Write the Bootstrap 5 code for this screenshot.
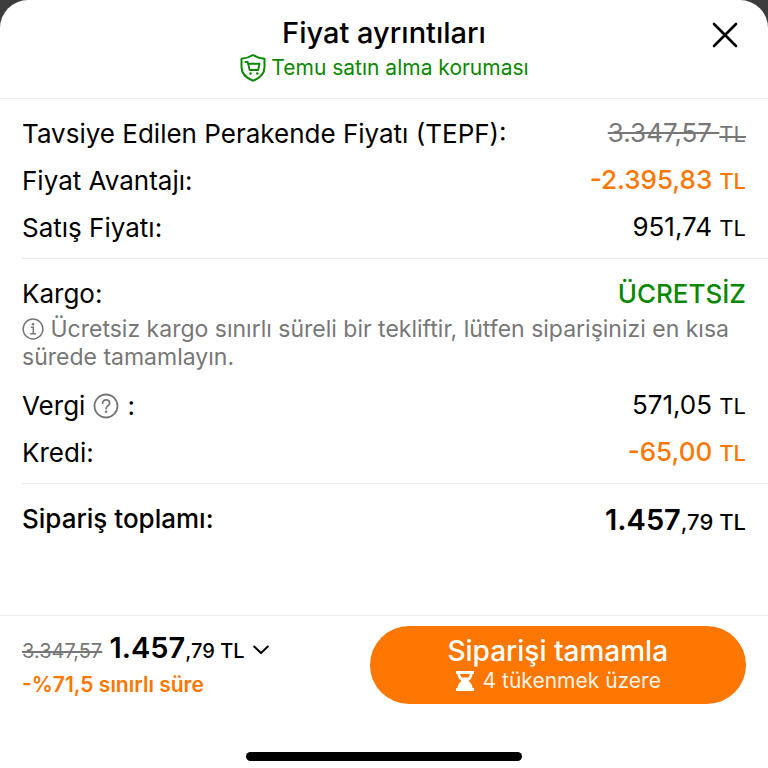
<!DOCTYPE html>
<html lang="tr">
<head>
<meta charset="utf-8">
<meta name="viewport" content="width=device-width, initial-scale=1">
<title>Fiyat ayrıntıları</title>
<link href="https://cdn.jsdelivr.net/npm/bootstrap@5.3.0/dist/css/bootstrap.min.css" rel="stylesheet">
<style>
  body { font-family: Inter, "Noto Sans", sans-serif; background: #3c3c3c; color: #000; font-size: 26px; line-height: 36px; }
  .sheet { border-radius: 28px 28px 0 0; }
  .sheet-head { padding: 14px 22px; border-bottom: 1px solid #efefef; }
  .sheet-title { font-size: 29px; line-height: 38px; font-weight: 500; }
  .protect { font-size: 21px; line-height: 32px; color: #0a8800; }
  .btn-x { top: 22px; right: 30px; width: 26px; height: 26px; }
  .group { margin-left: 22px; padding: 11px 22px 7px 0; border-bottom: 1px solid #ebebeb; }
  .line { min-height: 47px; }
  .unit { font-size: 22px; }
  .muted { color: #777; }
  .green { color: #0a8800; }
  .orange { color: #fb7701; }
  .note { font-size: 23px; line-height: 28px; color: #777; margin: -2px 0 11px; }
  .note svg { vertical-align: -3px; }
  .total-price { font-size: 29px; }
  .foot { border-top: 1px solid #ebebeb; padding: 10px 22px 0; }
  .old-price { font-size: 20px; }
  .now-price { font-size: 29px; }
  .cents { font-size: 20px; }
  .deal { font-size: 21px; line-height: 32px; font-weight: 600; }
  .btn-order { flex: 0 0 52%; min-height: 78px; background: #fb7701; font-size: 28px; line-height: 32px; }
  .btn-order:hover { background: #e96d00; }
  .btn-sub { font-size: 21px; line-height: 28px; font-weight: 400; color: #fff3e6; }
  .home-bar { width: 38%; height: 9px; margin-bottom: 7px; }
</style>
</head>
<body>
<div class="sheet bg-white min-vh-100 d-flex flex-column">
  <header class="sheet-head position-relative text-center">
    <h1 class="sheet-title m-0">Fiyat ayrıntıları</h1>
    <div class="protect d-flex align-items-center justify-content-center gap-1">
      <svg width="28" height="30" viewBox="0 0 28 30" fill="none" stroke="currentColor" stroke-width="2" stroke-linejoin="round" stroke-linecap="round" aria-hidden="true">
        <path d="M14 2C11 4 7 5.300 2.500 5.800V14c0 7 4.500 11 11.500 13.800C21 25 25.500 21 25.500 14V5.800C21 5.300 17 4 14 2Z"/>
        <path d="M6.500 9h2.200l2 8h8.500l1.300-6.300H9.200" stroke-width="1.900"/>
        <circle cx="11.500" cy="20.500" r="1.300" fill="currentColor" stroke="none"/><circle cx="18.300" cy="20.500" r="1.300" fill="currentColor" stroke="none"/>
      </svg>
      <span>Temu satın alma koruması</span>
    </div>
    <button type="button" class="btn btn-x position-absolute p-0 border-0 d-flex" aria-label="Kapat">
      <svg width="26" height="26" viewBox="0 0 26 26" stroke="#000" stroke-width="2.600" stroke-linecap="round"><path d="M2 2l22 22M24 2L2 24"/></svg>
    </button>
  </header>

  <main class="flex-grow-1">
    <section class="group">
      <div class="line d-flex align-items-center justify-content-between">
        <span>Tavsiye Edilen Perakende Fiyatı (TEPF):</span>
        <s class="muted">3.347,57 <span class="unit">TL</span></s>
      </div>
      <div class="line d-flex align-items-center justify-content-between">
        <span>Fiyat Avantajı:</span>
        <span class="orange fw-medium">-2.395,83 <span class="unit">TL</span></span>
      </div>
      <div class="line d-flex align-items-center justify-content-between">
        <span>Satış Fiyatı:</span>
        <span>951,74 <span class="unit">TL</span></span>
      </div>
    </section>

    <section class="group">
      <div class="line d-flex align-items-center justify-content-between">
        <span>Kargo:</span>
        <span class="green fw-medium">ÜCRETSİZ</span>
      </div>
      <p class="note">
        <svg width="22" height="22" viewBox="0 0 22 22" fill="none" stroke="currentColor" stroke-width="1.500" aria-hidden="true"><circle cx="11" cy="11" r="9.900"/><path d="M8.800 9.300h2.500v6.200M8.200 15.700h5.800"/><circle cx="11" cy="6.200" r="1.300" fill="currentColor" stroke="none"/></svg>
        Ücretsiz kargo sınırlı süreli bir tekliftir, lütfen siparişinizi en kısa sürede tamamlayın.
      </p>
      <div class="line d-flex align-items-center justify-content-between">
        <span class="d-flex align-items-center gap-2">Vergi
          <button type="button" class="btn p-0 border-0 d-flex muted" aria-label="Vergi hakkında bilgi">
            <svg width="26" height="26" viewBox="0 0 26 26" fill="none" stroke="currentColor" stroke-width="1.800" stroke-linecap="round"><circle cx="13" cy="13" r="11.500"/><path d="M9.600 10.200c0-4.400 7-4.400 7 0 0 2.600-3.500 2.800-3.500 5.300"/><circle cx="13.100" cy="18.700" r="1.300" fill="currentColor" stroke="none"/></svg>
          </button>
          <span>:</span></span>
        <span>571,05 <span class="unit">TL</span></span>
      </div>
      <div class="line d-flex align-items-center justify-content-between">
        <span>Kredi:</span>
        <span class="orange fw-medium">-65,00 <span class="unit">TL</span></span>
      </div>
    </section>

    <section class="group border-0">
      <div class="line d-flex align-items-center justify-content-between fw-medium">
        <span>Sipariş toplamı:</span>
        <span class="total-price pt-1 fw-semibold">1.457<span class="unit fw-medium">,79 TL</span></span>
      </div>
    </section>
  </main>

  <footer class="foot">
    <div class="d-flex align-items-start justify-content-between mb-5">
      <div class="pt-1">
        <div class="d-flex align-items-center gap-1">
          <div><s class="old-price muted">3.347,57</s> <span class="now-price fw-semibold">1.457<span class="cents fw-medium">,79 TL</span></span></div>
          <button type="button" class="btn p-0 ps-1 border-0 d-flex" aria-label="Ayrıntıları gizle">
            <svg width="16" height="10" viewBox="0 0 16 10" fill="none" stroke="#000" stroke-width="2" stroke-linecap="round" stroke-linejoin="round"><path d="M1.200 1.500L8 8l6.800-6.500"/></svg>
          </button>
        </div>
        <div class="deal orange">-%71,5 sınırlı süre</div>
      </div>
      <button type="button" class="btn btn-order rounded-pill border-0 p-0 text-white fw-medium">
        <span class="d-block">Siparişi tamamla</span>
        <span class="btn-sub d-flex align-items-center justify-content-center gap-2">
          <svg width="20" height="20" viewBox="0 0 20 20" aria-hidden="true"><path fill="#fff" fill-rule="evenodd" d="M1 0h18v3h-1.500c0 3-1.500 5-4 7 2.500 2 4 4 4 7H19v3H1v-3h1.500c0-3 1.500-5 4-7-2.500-2-4-4-4-7H1ZM5 3c.3 1.600 1 2.700 2 3.500h6c1-.8 1.700-1.900 2-3.500Z"/></svg>
          4 tükenmek üzere
        </span>
      </button>
    </div>
    <div class="home-bar bg-black rounded-pill mx-auto"></div>
  </footer>
</div>
<script src="https://cdn.jsdelivr.net/npm/bootstrap@5.3.0/dist/js/bootstrap.bundle.min.js"></script>
</body>
</html>
